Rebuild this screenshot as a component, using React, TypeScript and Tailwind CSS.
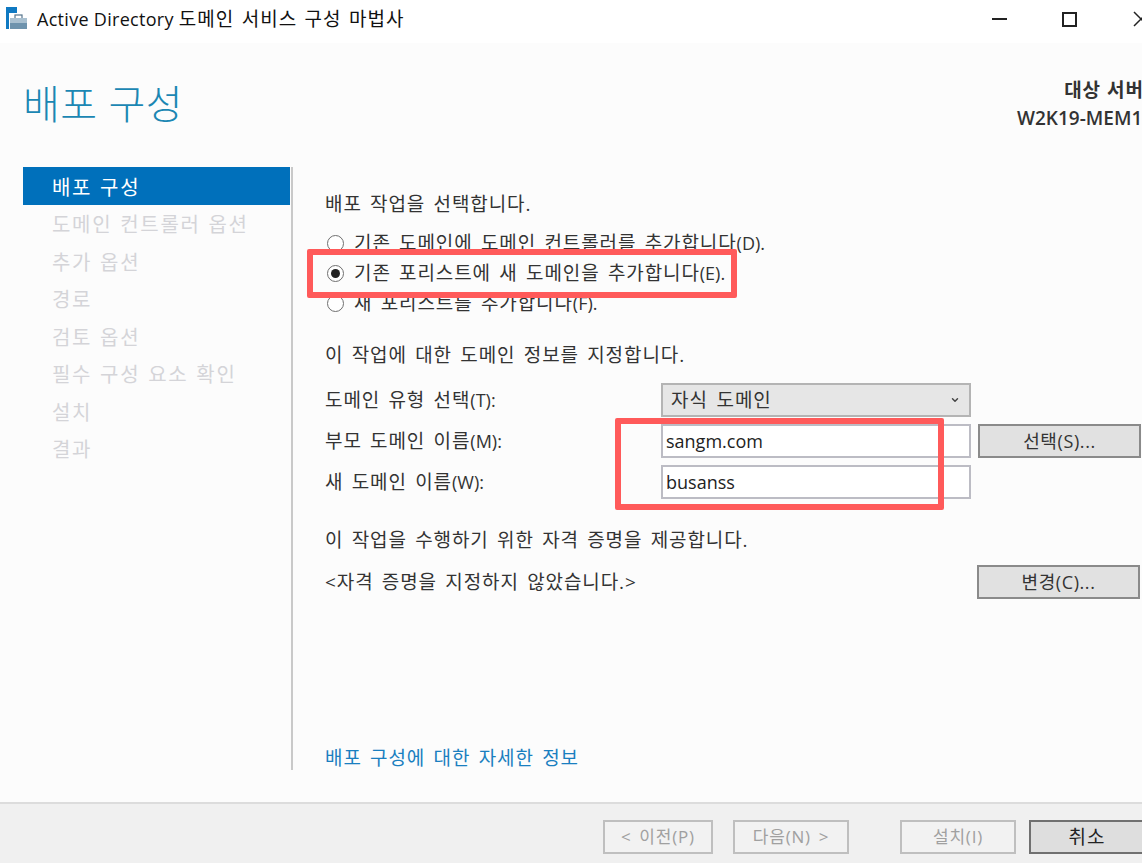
import { ChevronDown } from 'lucide-react';

const FONT = "font-['Open_Sans','Noto_Sans_CJK_KR',sans-serif]";

const steps = ['도메인 컨트롤러 옵션', '추가 옵션', '경로', '검토 옵션', '필수 구성 요소 확인', '설치', '결과'];

// Hangul runs wider than the latin accelerator suffix, e.g. "(E)."
function Label({ text }: { text: string }) {
  const m = text.match(/^(.*?)(\([A-Z]\).*)$/);
  if (!m) return <span>{text}</span>;
  return (
    <span>
      {m[1]}
      <span className="text-[18px] tracking-normal">{m[2]}</span>
    </span>
  );
}

function Radio({ checked, label }: { checked?: boolean; label: string }) {
  return (
    <div className="flex items-center h-[30px] gap-[10px] pl-[2px] whitespace-nowrap">
      <span className="w-[17px] h-[17px] rounded-full border border-[#6f6f6f] bg-white flex items-center justify-center">
        {checked && <span className="w-[9px] h-[9px] rounded-full bg-[#222222]" />}
      </span>
      <Label text={label} />
    </div>
  );
}

function FlatButton({ label, dark, disabled, className }: { label: string; dark?: boolean; disabled?: boolean; className: string }) {
  const look = dark
    ? 'border-[#707070] bg-[#dedede] text-[#222222] text-[19px] tracking-[1px]'
    : disabled
      ? 'border-[#bfbfbf] bg-[#f2f2f2] text-[#a0a0a0] text-[17px] tracking-[0.8px]'
      : 'border-[#8a8a8a] bg-[#e1e1e1] text-[#333333] text-[18px] tracking-[0.6px]';
  return (
    <div className={`h-[34px] shrink-0 border-2 flex items-center justify-center whitespace-nowrap ${look} ${className}`}>
      {label}
    </div>
  );
}

function TextField({ value }: { value: string }) {
  return (
    <div className="w-[310px] h-[34px] border-2 border-[#bcbcc4] bg-white flex items-center px-[3px] text-[18px] tracking-normal [word-spacing:0px] text-[#222222]">
      {value}
    </div>
  );
}

export default function App() {
  return (
    <div className={`relative w-[1142px] h-[863px] overflow-hidden flex flex-col bg-[#fcfcfc] text-[19px] text-[#333333] tracking-[0.9px] [word-spacing:2.5px] ${FONT}`}>
      {/* Title bar */}
      <div className="h-[43px] bg-white flex items-center pl-[5px] shrink-0">
        <svg width="24" height="24" viewBox="0 0 24 24" className="-mt-[7px]">
          <rect x="1" y="1" width="11" height="6" fill="#0f79c2" />
          <rect x="1" y="7" width="3" height="16" fill="#0f79c2" />
          <rect x="10" y="9" width="7" height="4" fill="none" stroke="#55748c" strokeWidth="1.2" />
          <rect x="5" y="12" width="17" height="5" fill="#a9c0d0" />
          <rect x="5" y="17" width="17" height="6" fill="#6e93ad" />
        </svg>
        <span className="ml-[8px] -mt-[5px] text-[18px] tracking-[0.3px] [word-spacing:0px] text-[#111111] whitespace-nowrap">
          Active Directory <span className="text-[19px] tracking-[1px] [word-spacing:1.5px]">도메인 서비스 구성 마법사</span>
        </span>
        <div className="ml-auto flex items-center -mt-[5px] mr-[-7px]">
          <div className="w-[15px] h-[2px] bg-[#222222] mr-[55px]" />
          <div className="w-[15px] h-[15px] border-2 border-[#222222] mr-[56px]" />
          <svg width="16" height="16" viewBox="0 0 16 16">
            <path d="M1 1l14 14M15 1L1 15" stroke="#222222" strokeWidth="1.5" fill="none" />
          </svg>
        </div>
      </div>

      {/* Page header */}
      <div className="h-[124px] shrink-0 flex justify-between pl-[23px]">
        <h1 className="text-[40px] leading-[60px] mt-[31px] font-light tracking-[0.5px] [word-spacing:0px] text-[#1b87b3] whitespace-nowrap">배포 구성</h1>
        <div className="mt-[33px] mr-[-16px] text-right font-semibold text-[19px] tracking-normal [word-spacing:0px] leading-[28px] text-[#333333] whitespace-nowrap">
          <div className="tracking-[1px] mr-[14px]">대상 서버</div>
          <div>W2K19-MEM1.x</div>
        </div>
      </div>

      <div className="flex flex-1 min-h-0">
        {/* Steps */}
        <div className="w-[293px] h-[603px] pl-[23px] border-r-2 border-[#c9c9c9] shrink-0 pr-[1px] text-[20px] tracking-[1.7px] [word-spacing:1px]">
          <div className="h-[38px] bg-[#0070bb] text-white flex items-center pl-[29px] pt-[3px]">배포 구성</div>
          {steps.map((s) => (
            <div key={s} className="h-[37.5px] flex items-center pl-[29px] pt-[3px] text-[#d4d4d8] whitespace-nowrap">
              {s}
            </div>
          ))}
        </div>

        {/* Form */}
        <div className="flex-1 pl-[32px] pt-[22px] min-w-0 flex flex-col h-[603px]">
          <p className="leading-[30px]">배포 작업을 선택합니다.</p>
          <div className="mt-[9px]">
            <Radio label="기존 도메인에 도메인 컨트롤러를 추가합니다(D)." />
            <Radio checked label="기존 포리스트에 새 도메인을 추가합니다(E)." />
            <Radio label="새 포리스트를 추가합니다(F)." />
          </div>
          <p className="leading-[30px] mt-[22px]">이 작업에 대한 도메인 정보를 지정합니다.</p>

          <div className="mt-[13px] grid grid-cols-[336px_310px_1fr] auto-rows-[34px] gap-y-[7px] items-center">
            <Label text="도메인 유형 선택(T):" />
            <div className="h-[34px] border-2 border-[#b4b4b4] bg-[#e6e6e6] flex items-center justify-between pl-[8px] pr-[9px] tracking-[1px] text-[#333333]">
              <span>자식 도메인</span>
              <ChevronDown className="w-[10px] h-[10px] text-[#444444]" strokeWidth={3.5} />
            </div>
            <span />
            <Label text="부모 도메인 이름(M):" />
            <TextField value="sangm.com" />
            <FlatButton label="선택(S)..." className="w-[163px] ml-[7px]" />
            <Label text="새 도메인 이름(W):" />
            <TextField value="busanss" />
            <span />
          </div>

          <p className="leading-[30px] mt-[26px]">이 작업을 수행하기 위한 자격 증명을 제공합니다.</p>
          <div className="mt-[10px] flex items-center">
            <span className="w-[652px] shrink-0">&lt;자격 증명을 지정하지 않았습니다.&gt;</span>
            <FlatButton label="변경(C)..." className="w-[163px]" />
          </div>

          <div className="mt-auto mb-[-3px] leading-[30px] text-[#1a7fc0] whitespace-nowrap">배포 구성에 대한 자세한 정보</div>
        </div>
      </div>

      {/* Footer */}
      <div className="h-[61px] shrink-0 bg-[#f0f0f0] border-t-2 border-[#dcdcdc] flex items-start pl-[603px] pt-[16px]">
        <FlatButton disabled label="< 이전(P)" className="w-[110px]" />
        <FlatButton disabled label="다음(N) >" className="w-[116px] ml-[20px]" />
        <FlatButton disabled label="설치(I)" className="w-[116px] ml-[51px]" />
        <FlatButton dark label="취소" className="w-[116px] ml-[13px]" />
      </div>

      {/* Red annotation boxes */}
      <div className="absolute left-[307px] top-[249px] w-[430px] h-[49px] border-[6px] border-[#ff5a5a] rounded-[2px]" />
      <div className="absolute left-[615px] top-[418px] w-[329px] h-[92px] border-[6px] border-[#ff5a5a] rounded-[2px]" />
    </div>
  );
}
